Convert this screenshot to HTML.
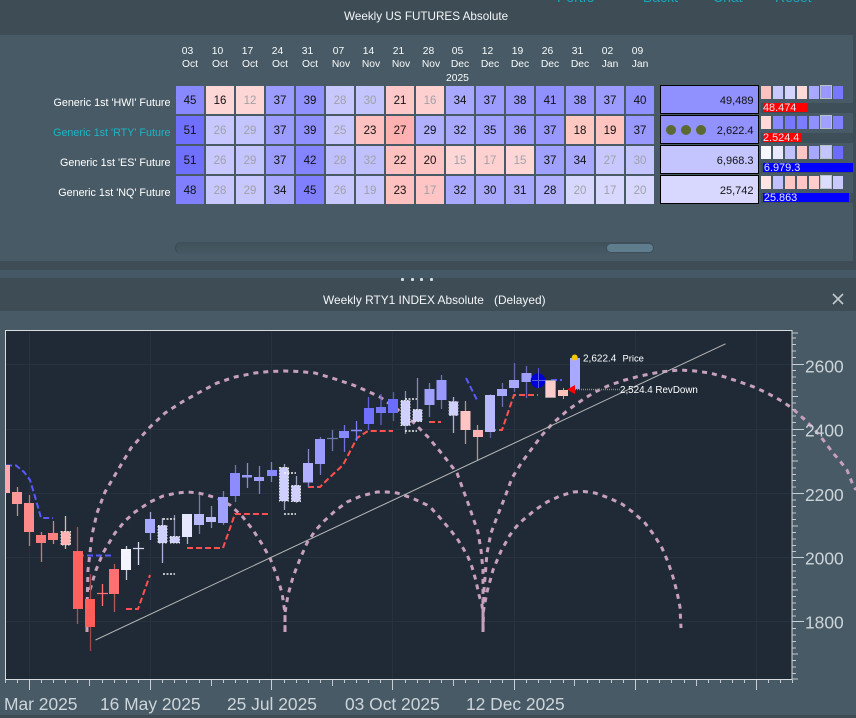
<!DOCTYPE html>
<html>
<head>
<meta charset="utf-8">
<style>
html,body{margin:0;padding:0;background:#485a65;}
body{width:856px;height:718px;position:relative;overflow:hidden;font-family:"Liberation Sans",sans-serif;color:#fff;}
.a{position:absolute;}
.c{position:absolute;width:28px;height:28px;line-height:31px;text-align:center;font-size:11.5px;color:#111;}
.g{color:#a0a0a8;}
.d{position:absolute;width:30px;text-align:center;font-size:10.3px;line-height:13px;top:45px;color:#f8fbfc;}
.d span{position:relative;left:-2.5px;}
.l{position:absolute;left:0;width:170.5px;text-align:right;font-size:10.75px;line-height:14px;color:#fff;}
.v{position:absolute;left:660px;width:97px;height:27px;border:1.5px solid #000;text-align:right;font-size:11px;line-height:31px;color:#111;padding-right:0;}
.v b{font-weight:normal;position:absolute;right:4.5px;}
.s{position:absolute;width:10px;height:12.5px;}
.h{outline:1px solid #b8c0c8;outline-offset:0;width:10px;height:12px;}
.t{position:absolute;left:761px;width:92px;height:10px;background:#3f4f59;}
.b{position:absolute;left:763px;height:9px;font-size:10.9px;line-height:10px;color:#e8e8f0;padding-left:0;overflow:hidden;white-space:nowrap;}
</style>
</head>
<body>
<!-- bands -->
<div class="a" style="left:0;top:0;width:856px;height:35px;background:#3d4c55"></div>
<div class="a" style="left:853px;top:35px;width:3px;height:226px;background:#3d4c55"></div>
<div class="a" style="left:0;top:261px;width:856px;height:9px;background:#3d4c55"></div>
<div class="a" style="left:0;top:270px;width:856px;height:8px;background:#445865"></div>
<div class="a" style="left:0;top:278px;width:856px;height:33px;background:#3d4c55"></div>
<div class="a" style="left:0;top:715px;width:856px;height:3px;background:#3d4c55"></div>

<!-- top -->
<div class="a" style="left:557px;top:-10px;font-size:14px;line-height:14px;color:#18a8c0">Portfo</div>
<div class="a" style="left:643px;top:-10px;font-size:14px;line-height:14px;color:#18a8c0">Backt</div>
<div class="a" style="left:713px;top:-10px;font-size:14px;line-height:14px;color:#18a8c0">Chat</div>
<div class="a" style="left:775px;top:-10px;font-size:14px;line-height:14px;color:#18a8c0">Reset</div>
<div class="a" style="left:344px;top:9px;font-size:11.7px;line-height:15px;color:#f4f6f8;white-space:nowrap">Weekly US FUTURES Absolute</div>

<!-- date headers -->
<div class="d" style="left:175px"><span>03</span><br>Oct</div>
<div class="d" style="left:205px"><span>10</span><br>Oct</div>
<div class="d" style="left:235px"><span>17</span><br>Oct</div>
<div class="d" style="left:265px"><span>24</span><br>Oct</div>
<div class="d" style="left:295px"><span>31</span><br>Oct</div>
<div class="d" style="left:326px"><span>07</span><br>Nov</div>
<div class="d" style="left:356px"><span>14</span><br>Nov</div>
<div class="d" style="left:386px"><span>21</span><br>Nov</div>
<div class="d" style="left:416px"><span>28</span><br>Nov</div>
<div class="d" style="left:445px"><span>05</span><br>Dec</div>
<div class="d" style="left:475px"><span>12</span><br>Dec</div>
<div class="d" style="left:505px"><span>19</span><br>Dec</div>
<div class="d" style="left:535px"><span>26</span><br>Dec</div>
<div class="d" style="left:565px"><span>31</span><br>Dec</div>
<div class="d" style="left:595px"><span>02</span><br>Jan</div>
<div class="d" style="left:625px"><span>09</span><br>Jan</div>
<div class="a" style="left:446px;top:72px;font-size:10.3px;line-height:13px;color:#f8fbfc">2025</div>

<!-- row labels -->
<div class="l" style="top:96px">Generic 1st 'HWI' Future</div>
<div class="l" style="top:126px;color:#1cb5c4">Generic 1st 'RTY' Future</div>
<div class="l" style="top:156px">Generic 1st 'ES' Future</div>
<div class="l" style="top:186px">Generic 1st 'NQ' Future</div>

<!-- row 1 -->
<div class="c" style="left:176px;top:86px;background:#8888ff">45</div>
<div class="c" style="left:206px;top:86px;background:#ffd6d6">16</div>
<div class="c g" style="left:236px;top:86px;background:#ffd6d6">12</div>
<div class="c" style="left:266px;top:86px;background:#9c9cff">37</div>
<div class="c" style="left:296px;top:86px;background:#9292ff">39</div>
<div class="c g" style="left:326px;top:86px;background:#c8c8ff">28</div>
<div class="c g" style="left:356px;top:86px;background:#c4c4ff">30</div>
<div class="c" style="left:386px;top:86px;background:#ffc8c8">21</div>
<div class="c g" style="left:416px;top:86px;background:#ffd0d0">16</div>
<div class="c" style="left:446px;top:86px;background:#a8a8ff">34</div>
<div class="c" style="left:476px;top:86px;background:#9c9cff">37</div>
<div class="c" style="left:506px;top:86px;background:#9898ff">38</div>
<div class="c" style="left:536px;top:86px;background:#9090ff">41</div>
<div class="c" style="left:566px;top:86px;background:#9898ff">38</div>
<div class="c" style="left:596px;top:86px;background:#9c9cff">37</div>
<div class="c" style="left:626px;top:86px;background:#9090ff">40</div>
<!-- row 2 -->
<div class="c" style="left:176px;top:116px;background:#7070ff">51</div>
<div class="c g" style="left:206px;top:116px;background:#c8c8ff">26</div>
<div class="c g" style="left:236px;top:116px;background:#c4c4ff">29</div>
<div class="c" style="left:266px;top:116px;background:#9c9cff">37</div>
<div class="c" style="left:296px;top:116px;background:#9090ff">39</div>
<div class="c g" style="left:326px;top:116px;background:#c8c8ff">25</div>
<div class="c" style="left:356px;top:116px;background:#ffc0c0">23</div>
<div class="c" style="left:386px;top:116px;background:#ffb0b0">27</div>
<div class="c" style="left:416px;top:116px;background:#b0b0ff">29</div>
<div class="c" style="left:446px;top:116px;background:#a8a8ff">32</div>
<div class="c" style="left:476px;top:116px;background:#a0a0ff">35</div>
<div class="c" style="left:506px;top:116px;background:#9c9cff">36</div>
<div class="c" style="left:536px;top:116px;background:#9898ff">37</div>
<div class="c" style="left:566px;top:116px;background:#ffc8c0">18</div>
<div class="c" style="left:596px;top:116px;background:#ffc4c0">19</div>
<div class="c" style="left:626px;top:116px;background:#9898ff">37</div>
<!-- row 3 -->
<div class="c" style="left:176px;top:146px;background:#7070ff">51</div>
<div class="c g" style="left:206px;top:146px;background:#c8c8ff">26</div>
<div class="c g" style="left:236px;top:146px;background:#c4c4ff">29</div>
<div class="c" style="left:266px;top:146px;background:#9c9cff">37</div>
<div class="c" style="left:296px;top:146px;background:#8484ff">42</div>
<div class="c g" style="left:326px;top:146px;background:#c0c0ff">28</div>
<div class="c g" style="left:356px;top:146px;background:#c0c0ff">32</div>
<div class="c" style="left:386px;top:146px;background:#ffc0c0">22</div>
<div class="c" style="left:416px;top:146px;background:#ffc4c4">20</div>
<div class="c g" style="left:446px;top:146px;background:#ffd6d6">15</div>
<div class="c g" style="left:476px;top:146px;background:#ffd0d0">17</div>
<div class="c g" style="left:506px;top:146px;background:#ffd6d6">15</div>
<div class="c" style="left:536px;top:146px;background:#a0a0ff">37</div>
<div class="c" style="left:566px;top:146px;background:#a8a8ff">34</div>
<div class="c g" style="left:596px;top:146px;background:#c8c8ff">27</div>
<div class="c g" style="left:626px;top:146px;background:#c4c4ff">30</div>
<!-- row 4 -->
<div class="c" style="left:176px;top:176px;background:#8080ff">48</div>
<div class="c g" style="left:206px;top:176px;background:#c8c8ff">28</div>
<div class="c g" style="left:236px;top:176px;background:#c8c8ff">29</div>
<div class="c" style="left:266px;top:176px;background:#a8a8ff">34</div>
<div class="c" style="left:296px;top:176px;background:#8080ff">45</div>
<div class="c g" style="left:326px;top:176px;background:#c8c8ff">26</div>
<div class="c g" style="left:356px;top:176px;background:#c8c8ff">19</div>
<div class="c" style="left:386px;top:176px;background:#ffc0c0">23</div>
<div class="c g" style="left:416px;top:176px;background:#ffc4c4">17</div>
<div class="c" style="left:446px;top:176px;background:#a8a8ff">32</div>
<div class="c" style="left:476px;top:176px;background:#a8a8ff">30</div>
<div class="c" style="left:506px;top:176px;background:#a8a8ff">31</div>
<div class="c" style="left:536px;top:176px;background:#b0b0ff">28</div>
<div class="c g" style="left:566px;top:176px;background:#d8d8ff">20</div>
<div class="c g" style="left:596px;top:176px;background:#d8d8ff">17</div>
<div class="c g" style="left:626px;top:176px;background:#d8d8ff">20</div>

<!-- value cells -->
<div class="v" style="top:85px;background:#9090ff"><b>49,489</b></div>
<div class="v" style="top:115px;background:#9292ff"><b>2,622.4</b></div>
<div class="v" style="top:145px;background:#c4c4ff"><b>6,968.3</b></div>
<div class="v" style="top:175px;background:#d8d8ff"><b>25,742</b></div>
<svg class="a" style="left:660px;top:120px" width="50" height="20"><circle cx="11" cy="10" r="5" fill="#5a6a30"/><circle cx="26" cy="10" r="5" fill="#5a6a30"/><circle cx="41" cy="10" r="5" fill="#5a6a30"/></svg>

<!-- tracks -->
<div class="t" style="top:102.5px"></div>
<div class="t" style="top:132.5px"></div>
<div class="t" style="top:162.5px"></div>
<div class="t" style="top:192.5px"></div>

<!-- mini squares -->
<div class="s" style="left:761px;top:86px;background:#ffc0c0"></div><div class="s" style="left:773px;top:86px;background:#c8c8ff"></div><div class="s" style="left:785px;top:86px;background:#d4d4ff"></div><div class="s" style="left:797px;top:86px;background:#ffd8d8"></div><div class="s" style="left:809px;top:86px;background:#a8a8ff"></div><div class="s h" style="left:821px;top:86px;background:#9898ff"></div><div class="s" style="left:833px;top:86px;background:#7878ff"></div>
<div class="s" style="left:761px;top:116px;background:#ffd8d8"></div><div class="s" style="left:773px;top:116px;background:#8888ff"></div><div class="s" style="left:785px;top:116px;background:#7878ff"></div><div class="s" style="left:797px;top:116px;background:#7c7cff"></div><div class="s" style="left:809px;top:116px;background:#9090ff"></div><div class="s h" style="left:821px;top:116px;background:#a0a0ff"></div><div class="s" style="left:833px;top:116px;background:#8080ff"></div>
<div class="s" style="left:761px;top:146px;background:#f8f8ff"></div><div class="s" style="left:773px;top:146px;background:#e8e8ff"></div><div class="s" style="left:785px;top:146px;background:#c0c0ff"></div><div class="s" style="left:797px;top:146px;background:#ffc4c4"></div><div class="s" style="left:809px;top:146px;background:#a8a8ff"></div><div class="s h" style="left:821px;top:146px;background:#c4c4ff"></div><div class="s" style="left:833px;top:146px;background:#6c6cff"></div>
<div class="s" style="left:761px;top:176px;background:#ffe4e4"></div><div class="s" style="left:773px;top:176px;background:#c0c0ff"></div><div class="s" style="left:785px;top:176px;background:#ffc4c4"></div><div class="s" style="left:797px;top:176px;background:#ffc4c4"></div><div class="s" style="left:809px;top:176px;background:#ffcccc"></div><div class="s h" style="left:821px;top:176px;background:#dcdcff"></div><div class="s" style="left:833px;top:176px;background:#c8c8ff"></div>

<!-- bars -->
<div class="b" style="top:103px;width:44px;background:#ff0000">48.474</div>
<div class="b" style="top:133px;width:38px;background:#ff0000">2.524.4</div>
<div class="b" style="top:163px;width:90px;background:#0000ff">&#8202;6.979.3</div>
<div class="b" style="top:193px;width:86px;background:#0000ff">&#8202;25.863</div>

<!-- scrollbar -->
<div class="a" style="left:175px;top:242px;width:479px;height:12px;border-radius:6px;background:linear-gradient(#3f505a,#43555f 50%,#465863);box-sizing:border-box;border-left:1px solid #3a4a54"></div>
<div class="a" style="left:606px;top:243px;width:48px;height:10px;border-radius:5px;background:#5f7d8c;box-sizing:border-box;border:1px solid #3f505a"></div>

<!-- dots -->
<div class="a" style="left:401px;top:278px;width:3px;height:3px;background:#cfe0ea;border-radius:1px"></div>
<div class="a" style="left:411px;top:278px;width:3px;height:3px;background:#cfe0ea;border-radius:1px"></div>
<div class="a" style="left:420px;top:278px;width:3px;height:3px;background:#cfe0ea;border-radius:1px"></div>
<div class="a" style="left:430px;top:278px;width:3px;height:3px;background:#cfe0ea;border-radius:1px"></div>

<div class="a" style="left:323px;top:293px;font-size:11.9px;line-height:15px;color:#f4f6f8;white-space:nowrap">Weekly RTY1 INDEX Absolute</div>
<div class="a" style="left:494px;top:293px;font-size:11.9px;line-height:15px;color:#f4f6f8;white-space:nowrap">(Delayed)</div>
<svg class="a" style="left:831px;top:292px" width="14" height="14"><path d="M2 2L12 12M12 2L2 12" stroke="#c0c8cc" stroke-width="1.6" fill="none"/></svg>

<!-- chart -->
<svg class="a" style="left:0;top:0" width="856" height="718" font-family="'Liberation Sans',sans-serif">
<rect x="5.5" y="330.5" width="786.5" height="349" fill="#1f2a36" stroke="#d8dcdf" stroke-width="1"/>
<path d="M29.5 331V679M150.5 331V679M271.5 331V679M392.5 331V679M514.5 331V679M635.5 331V679M756.5 331V679M6 364.5H791M6 429.5H791M6 493.5H791M6 557.5H791M6 621.5H791" stroke="#26333e" stroke-width="1" fill="none"/>

<!-- axis ticks right -->
<path d="M792 338H796M792 344.5H796M792 351H796M792 357.5H796M792 370.5H796M792 377H796M792 383.5H796M792 390H796M792 403H796M792 409.5H796M792 416H796M792 422.5H796M792 435.5H796M792 442H796M792 448.5H796M792 455H796M792 468H796M792 474.5H796M792 480.5H796M792 487H796M792 500H796M792 506.5H796M792 513H796M792 519.5H796M792 532.5H796M792 539H796M792 545.5H796M792 551.5H796M792 564.5H796M792 571H796M792 577.5H796M792 584H796M792 596.5H796M792 603H796M792 609.5H796M792 616H796M792 628.5H796M792 635H796M792 641.5H796M792 648H796M792 660.5H796M792 667H796M792 673.5H796" stroke="#c4cacf" stroke-width="1"/>
<path d="M792 333H798M792 396.5H798M792 461H798M792 526H798M792 590H798M792 654H798M792 679H798" stroke="#c4cacf" stroke-width="1"/>
<path d="M792 364.5H804M792 429.5H804M792 493.5H804M792 557.5H804M792 621.5H804" stroke="#c8ced3" stroke-width="1"/>

<!-- bottom ticks -->
<path d="M5.5 680V683M17.5 680V683M41.5 680V683M53.5 680V683M65.5 680V683M77.5 680V683M102.5 680V683M114.5 680V683M126.5 680V683M138.5 680V683M162.5 680V683M174.5 680V683M186.5 680V683M199.5 680V683M223.5 680V683M235.5 680V683M247.5 680V683M259.5 680V683M284.5 680V683M296.5 680V683M308.5 680V683M320.5 680V683M344.5 680V683M356.5 680V683M368.5 680V683M380.5 680V683M405.5 680V683M417.5 680V683M429.5 680V683M441.5 680V683M465.5 680V683M478.5 680V683M490.5 680V683M502.5 680V683M526.5 680V683M538.5 680V683M550.5 680V683M563.5 680V683M587.5 680V683M599.5 680V683M611.5 680V683M623.5 680V683M647.5 680V683M659.5 680V683M671.5 680V683M684.5 680V683M708.5 680V683M720.5 680V683M732.5 680V683M744.5 680V683M768.5 680V683M780.5 680V683M792.5 680V683" stroke="#c4cacf" stroke-width="1"/>
<path d="M89.5 680V686M211.5 680V686M332.5 680V686M453.5 680V686M574.5 680V686M696.5 680V686" stroke="#c4cacf" stroke-width="1"/>
<path d="M29.5 680V690M150.5 680V690M271.5 680V690M392.5 680V690M514.5 680V690M635.5 680V690M756.5 680V690" stroke="#c8ced3" stroke-width="1"/>

<!-- arcs -->
<g fill="none" stroke="#c8a0bd" stroke-width="3" stroke-dasharray="5 5">
<polyline points="87,632 87,610 88,570 92,535 97,513 105,492 115,475 131,448 150,427 165,413 182,402 200,392 217,383 235,377 255,373 270,371.5 285,371 300,371.5 315,373 335,379 353,385 367,391 380,397 397,409 413,422 428,437 443,455 457,473 468,503 478,532 481,550 483,570 483,600 483,632"/>
<polyline points="90,590 96,570 103,553 115,533 125,521 135,512 150,502 163,496 177,493 188,492 198,493 207,495 219,499 230,505 242,516 253,530 262,544 270,558 277,576 282,593 285,613 285,632"/>
<polyline points="285,632 285,613 288,595 293,577 300,559 307,543 315,531 323,522 335,511 347,502 361,496 377,492 387,492 397,493 412,498 427,505 432,509 442,520 452,532 458,540 463,548 468,557 472,567 476,581 479,595 482,605 483,613 483,632"/>
<polyline points="483,632 483,613 487,592 493,570 501,551 510,535 516,527 523,520 535,510 547,502 560,496 573,492 584,491.5 595,493 609,498 622,504 634,513 645,523 654,535 662,548 668,562 673,577 677,592 680,607 681,628"/>
<polyline points="483,632 484,590 487,553 491,533 497,517 505,497 512,478 522,462 533,447 543,434 553,423 568,410 585,398 597,391 610,385 625,380 640,376 660,372 680,370 695,371 710,373 725,377 740,382 754,387 767,393 780,400 792,408 804,419 815,430 824,441 833,453 840,461 847,470 853,485 856,490"/>
</g>

<!-- trend -->
<path d="M95.5 640L725.5 343.8" stroke="#b8b8b8" stroke-width="1" fill="none"/>

<!-- dashed blue -->
<g fill="none" stroke="#5a5aff" stroke-width="2" stroke-dasharray="6 3">
<polyline points="6,465.5 16,465.5 24,472 30,480 36,500 41,518 53,518"/>
<path d="M78 555.5H114M466 378L478 402M551 380H562"/>
</g>
<!-- dashed red -->
<g fill="none" stroke="#ff5050" stroke-width="2" stroke-dasharray="6 3">
<polyline points="126,609 138,609 150,575"/>
<polyline points="187,548 223,548 235,514 271,514"/>
<polyline points="308,487 320,487 328,479 343,465 357,438 368,431 393,431"/>
<path d="M429 422H441"/>
<polyline points="490,430 502,430 514,395 538,395"/>
</g>

<!-- candles -->
<rect x="5" y="465" width="5" height="28" fill="#ffaaaa"/>
<g stroke-width="1.3">
<path d="M17.5 487V516" stroke="#cc8888"/><rect x="12" y="492" width="10" height="12" fill="#ff9999"/>
<path d="M29.5 495V546" stroke="#cc7777"/><rect x="24" y="503" width="10" height="29" fill="#ff8a8a"/>
<path d="M41.5 532V562" stroke="#e07070"/><rect x="36" y="535" width="10" height="8" fill="#ff7a7a"/>
<path d="M53.5 521V544" stroke="#e08080"/><rect x="48" y="533" width="10" height="7" fill="#ff8080"/>
<path d="M65.5 516V549" stroke="#e8b0b0"/>
<path d="M77.5 527V624" stroke="#b05050"/><rect x="73" y="551" width="10" height="58" fill="#ff6060"/>
<path d="M90.5 574V651" stroke="#a04848"/><rect x="85" y="599" width="10" height="28" fill="#ff5c5c"/>
<path d="M102.5 584V606M97 593.5H108" stroke="#ff7070"/>
<path d="M114.5 564V612" stroke="#b05a5a"/><rect x="109" y="569" width="10" height="25" fill="#ff7070"/>
<path d="M126.5 546V580" stroke="#c8c8d8"/><rect x="121" y="549" width="10" height="21" fill="#f4f4ff"/>
<path d="M138.5 542V565M133 548.5H144" stroke="#d8d8f0"/>
<path d="M150.5 512V540" stroke="#a8a8e0"/><rect x="145" y="519" width="10" height="14" fill="#a8a8ff"/>
<path d="M162.5 518V563" stroke="#b0b0d8"/>
<path d="M174.5 515V543" stroke="#9090b0"/>
<path d="M187.5 514V544" stroke="#b0b0c8"/><rect x="182" y="514" width="10" height="23" fill="#e6e6ff"/>
<path d="M199.5 495V534" stroke="#7878b0"/><rect x="194" y="514" width="10" height="11" fill="#b8b8ff"/>
<path d="M211.5 506V528" stroke="#8888c0"/><rect x="206" y="517" width="10" height="5" fill="#c0c0ff"/>
<path d="M223.5 491V525" stroke="#7878b8"/><rect x="218" y="497" width="10" height="26" fill="#a0a0ff"/>
<path d="M235.5 465V502" stroke="#7070b8"/><rect x="230" y="473" width="10" height="23" fill="#8c8cff"/>
<path d="M247.5 463V488" stroke="#8888d8"/><rect x="242" y="475" width="10" height="2.5" fill="#9a9aff"/>
<path d="M259.5 466V494" stroke="#8080d0"/><rect x="254" y="477" width="10" height="4" fill="#a0a0ff"/>
<path d="M271.5 462V482" stroke="#8080d0"/><rect x="267" y="470" width="10" height="6" fill="#8888ff"/>
<path d="M284.5 464V510" stroke="#a0a0c0"/>
<path d="M296.5 476V503" stroke="#a0a0c0"/>
<path d="M308.5 449V487" stroke="#8888c0"/><rect x="303" y="463" width="10" height="19.5" fill="#b0b0ff"/>
<path d="M320.5 437V475" stroke="#7878c0"/><rect x="315" y="439" width="10" height="25" fill="#9a9aff"/>
<path d="M332.5 430V451M327 438.5H338" stroke="#6c78a8"/>
<path d="M344.5 425V452" stroke="#7070e0"/><rect x="339" y="431" width="10" height="7" fill="#8888ff"/>
<path d="M356.5 421V441" stroke="#7c7cf0"/><path d="M351 430.5H362" stroke="#8888ff" stroke-width="1.5"/>
<path d="M368.5 397V430" stroke="#6060d8"/><rect x="364" y="408" width="10" height="16" fill="#7070ff"/>
<path d="M381 394V425" stroke="#6060d0"/><rect x="376" y="407" width="10" height="6" fill="#7878ff"/>
<path d="M393.5 392V421" stroke="#5858c8"/><rect x="388" y="399" width="10" height="14" fill="#6c6cff"/>
<path d="M405.5 391V434" stroke="#8888a8"/>
<path d="M417.5 378V421" stroke="#8888a8"/>
<path d="M429.5 383V417" stroke="#7878b8"/><rect x="424.5" y="389" width="10" height="16" fill="#a0a0ff"/>
<path d="M441.5 375V409" stroke="#7070c0"/><rect x="436.5" y="380" width="10" height="20" fill="#9898ff"/>
<path d="M453.5 397V433" stroke="#b0b0d8"/>
<path d="M465.5 401V444" stroke="#a89898"/><rect x="460.5" y="411" width="10" height="19" fill="#ffc4c4"/>
<path d="M477.5 425V460" stroke="#b89098"/><rect x="473" y="430" width="10" height="7" fill="#ffb0b0"/>
<path d="M490.5 394V438" stroke="#6060a0"/><rect x="485" y="395" width="10" height="37" fill="#b8b8ff"/>
<path d="M502.5 383V407" stroke="#7070b0"/><rect x="497" y="389" width="10" height="7" fill="#a8a8ff"/>
<path d="M514.5 363V392" stroke="#6868a8"/><rect x="509" y="380" width="10" height="8" fill="#a8a8ff"/>
<path d="M526.5 366V398" stroke="#6868b8"/><rect x="521.5" y="373" width="10" height="9" fill="#a0a0ff"/>
</g>
<!-- dotted-border candles -->
<g stroke="#e8e8e8" stroke-dasharray="1.5 1.5" stroke-width="1">
<rect x="61" y="531.5" width="9.5" height="13.5" fill="#ffb3b3"/>
<rect x="158" y="525.5" width="9" height="17.5" fill="#d0d0ff"/>
<rect x="170" y="536.5" width="9.5" height="6.5" fill="#d0d0ff"/>
<rect x="279.5" y="467.5" width="9" height="33.5" fill="#d0d0ff"/>
<rect x="291.5" y="485.5" width="9" height="16" fill="#d0d0ff"/>
<rect x="401" y="400.5" width="9" height="25" fill="#d0d0ff"/>
<rect x="413" y="409.5" width="9" height="12" fill="#d0d0ff"/>
<rect x="449" y="401.5" width="9" height="14" fill="#d0d0ff" stroke="#c0c0c8"/>
</g>
<circle cx="538" cy="380.7" r="7.3" fill="#0000d8"/>
<path d="M538.5 368V388M532 380.5H545" stroke="#5a5ae0"/>
<rect x="545.5" y="380.5" width="10" height="17" fill="#ffcccc" stroke="#a8a8a8" stroke-width="0.7"/>
<path d="M563.5 388V399" stroke="#c0a0a0"/><rect x="558" y="390" width="10" height="6" fill="#ffc4b8"/>
<rect x="570" y="358" width="10" height="31" fill="#a8a8ff"/>

<!-- dotted levels -->
<g stroke="#f0f0f0" stroke-width="1.4" stroke-dasharray="2 1.5" fill="none">
<path d="M163 519H175M163 574H175M284 473H296M284 514H296M405 399H417M405 431H417"/>
</g>
<path d="M575 389.5H620" stroke="#8a8a8a" stroke-width="1.5" stroke-dasharray="1 1" fill="none"/>

<circle cx="574.7" cy="357.5" r="3" fill="#f7c600"/>
<path d="M567 389.5L575 385V394Z" fill="#ff0000"/>

<text x="583" y="361.5" font-size="10" fill="#fff">2,622.4</text>
<text x="622.5" y="361.5" font-size="9.4" fill="#fff">Price</text>
<text x="620" y="393" font-size="9.8" fill="#fff">2,524.4 RevDown</text>

<!-- axis labels -->
<g font-size="17.4" fill="#cdd5da">
<text x="805" y="372.5">2600</text>
<text x="805" y="436.7">2400</text>
<text x="805" y="501">2200</text>
<text x="805" y="564.7">2000</text>
<text x="805" y="628.5">1800</text>
<text x="4" y="710">Mar 2025</text>
<text x="100" y="710">16 May 2025</text>
<text x="227" y="710">25 Jul 2025</text>
<text x="345" y="710">03 Oct 2025</text>
<text x="466" y="710">12 Dec 2025</text>
</g>
</svg>
</body>
</html>
